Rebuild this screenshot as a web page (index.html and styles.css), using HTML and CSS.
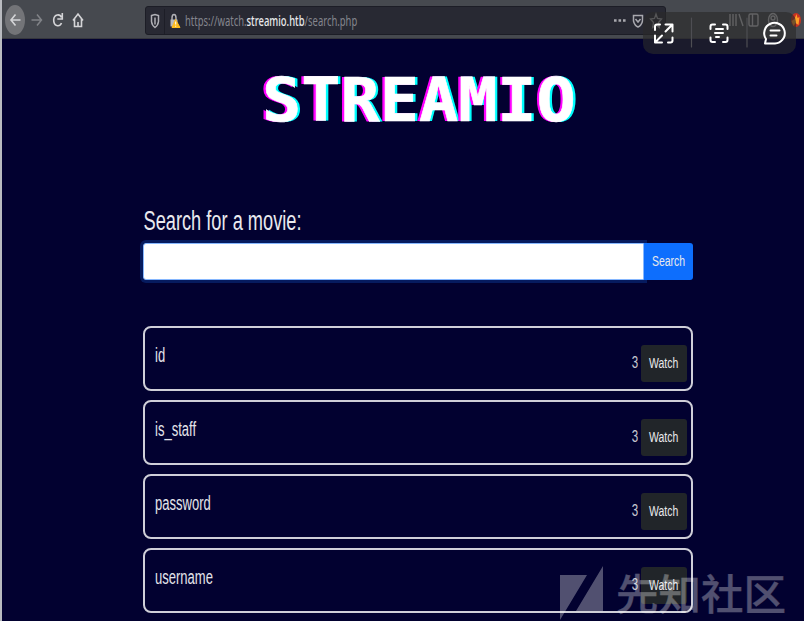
FILE: index.html
```html
<!DOCTYPE html>
<html lang="en">
<head>
<meta charset="utf-8">
<title>Streamio</title>
<link rel="stylesheet" href="styles.css">
</head>
<body>
<div class="window">
  <header class="toolbar">
    <svg class="nav" width="90" height="39" viewBox="0 0 90 39" fill="none" stroke="#d4d4d7" stroke-width="1.600">
      <ellipse cx="13" cy="20" rx="10" ry="15" fill="#737478" stroke="none"/>
      <path d="M18.500 20H9M13.500 14.500L9 20l4.500 5.500"/>
      <path d="M29.500 20h10M35 14.500l4.500 5.500-4.500 5.500" stroke="#818388" stroke-width="1.500"/>
      <path d="M59.500 17.500C58 13.500 52.200 14 51.700 19.500C51.500 26.500 57.500 27.500 59.500 23M60.300 13v6h-5"/>
      <path d="M71 20.500l5-6.500 5 6.500M72.500 19v7.500h7V19M76 26v-4"/>
    </svg>
    <div class="address">
      <svg class="lock" width="38" height="32" viewBox="0 0 38 32" fill="none" stroke="#b0b0b6" stroke-width="1.500">
        <path d="M5.500 8.500q3.500-1 3.500-1q3.500 1 3.500 1v6q-.5 4-3.500 6q-3-2-3.500-6zM9 10.500v7"/>
        <path d="M18.500 2v28" stroke="#1d1e27" stroke-width="1"/>
        <path d="M26 13v-2q0-3.500 2-3.500t2 3.500v2"/>
        <path d="M24.500 12.500h7v7h-7z" fill="#b8b8bd" stroke="none"/>
        <path d="M29.500 12.500l4.500 8h-8z" fill="#ffbd20" stroke="#ffbd20" stroke-width="1"/>
        <path d="M29.700 14.500v3M29.700 18.700v1" stroke="#fff" stroke-width="1"/>
      </svg>
      <span class="url">https://watch.<b>streamio.htb</b>/search.php</span>
      <svg class="actions" width="54" height="32" viewBox="0 0 54 32" fill="none" stroke="#a8a8ae" stroke-width="1.500">
        <path d="M4 13.500h12" stroke-width="2.500" stroke-dasharray="2.600 1.900"/>
        <path d="M23.500 8.500h9v5.500q-1 4.500-4.500 6q-3.500-1.500-4.500-6zM25.500 12l2.500 3 2.500-3"/>
        <path d="M46 7l1.500 4.500 4 .5-3 3.500.8 5-3.300-2.500-3.300 2.500.8-5-3-3.500 4-.5z" stroke="#a0a1a7" stroke-width="1.300"/>
      </svg>
    </div>
    <svg class="extras" width="78" height="39" viewBox="0 0 78 39" fill="none" stroke="#c2c3c7" stroke-width="1.400">
      <path d="M4 14v12M7 14v12M10 14v12M13 14l4 12"/>
      <rect x="23" y="14" width="9" height="12" rx="1.500"/><path d="M26.500 14v12"/>
      <ellipse cx="47" cy="20" rx="4.500" ry="6.500"/><circle cx="47" cy="18" r="2"/><path d="M44 25q3-5 6 0"/>
      <ellipse cx="70" cy="20" rx="5" ry="7" fill="#c83222" stroke="none"/>
      <path d="M65.500 21l3-2 2-5 1 4 2-1-1 8-3-2-2 3z" fill="#ff9e27" stroke="none"/>
    </svg>
  </header>
  <main class="page">
    <h1 class="brand"><span>STREAMIO</span></h1>
    <h2 class="label"><span>Search for a movie:</span></h2>
    <form class="search">
      <input class="field" type="text" aria-label="Movie">
      <button class="submit" type="button"><span class="narrow">Search</span></button>
    </form>
    <ul class="results">
      <li class="movie"><span class="name">id</span><span class="count">3</span><button class="watch"><span class="narrow">Watch</span></button></li>
      <li class="movie"><span class="name">is_staff</span><span class="count">3</span><button class="watch"><span class="narrow">Watch</span></button></li>
      <li class="movie"><span class="name">password</span><span class="count">3</span><button class="watch"><span class="narrow">Watch</span></button></li>
      <li class="movie"><span class="name">username</span><span class="count">3</span><button class="watch"><span class="narrow">Watch</span></button></li>
    </ul>
  </main>
</div>
<div class="viewer">
  <svg width="153" height="42" viewBox="0 0 153 42" fill="none" stroke="#fff" stroke-width="2" stroke-linecap="round" stroke-linejoin="round">
    <path d="M48.500 6v29M104 6v29" stroke="#4e4e53" stroke-width="1.200"/>
    <path d="M12 18v-3.500q0-2 2-2h3M22.500 12.500H29.500v7M29.500 12.500l-7 7M12 23.500v7H19M12 30.500l7-7M29.500 25.500v3q0 2-2 2H25"/>
    <path d="M67.500 17v-2.500q0-2 2-2H72M80 12.500h2.500q2 0 2 2V17M84.500 25.500v2.500q0 2-2 2H80M72 30h-2.500q-2 0-2-2V25.500M73 17h7M72 21h8M73 25h3"/>
    <path d="M122 31.500l1-4.500a10.300 10.300 0 1 1 9 4.500zM127.500 18.500h9M127.500 23.500h6"/>
  </svg>
</div>
<div class="watermark">
  <svg width="44" height="54" viewBox="0 0 44 54"><path d="M0 9h27L0 54zM43 0v45H16z" fill="currentColor"/></svg>
  <span lang="zh">先知社区</span>
</div>
</body>
</html>
```
FILE: styles.css
```css
* { box-sizing: border-box; }
body {
  margin: 0;
  height: 624px;
  overflow: hidden;
  background: #fff;
  font-family: "Liberation Sans", sans-serif;
  position: relative;
}
.window {
  height: 621px;
  border-left: 2px solid #b9bbc0;
  background: #020130;
  overflow: hidden;
}
.toolbar {
  height: 39px;
  background: #46494f;
  border-bottom: 1px solid #35363d;
  display: flex;
}
.nav { flex: none; }
.address {
  flex: none;
  display: flex;
  width: 521px;
  height: 29px;
  margin: 6px 0 0 53px;
  border: 1px solid #1c1d26;
  border-radius: 3px;
  background: #282933;
  overflow: hidden;
}
.lock { flex: none; }
.url {
  flex: 1;
  font: 15px/27px "Noto Sans", sans-serif;
  color: #85868e;
  white-space: nowrap;
  transform: translateX(1px) scaleX(.629);
  transform-origin: left;
}
.url b { color: #e9e9ec; font-weight: 500; }
.actions { flex: none; margin-right: 1px; }
.extras { flex: none; margin-left: 60px; }
.page { padding: 0 111px 0 141px; }
.brand {
  margin: 23px 0 0 119px;
  height: 77px;
  font: bold 60.500px/77px "DejaVu Sans Mono", monospace;
  color: #fff;
}
.brand span {
  display: inline-block;
  transform: scaleX(1.077);
  transform-origin: left;
  -webkit-text-stroke: .6px #fff;
  text-shadow: -2.500px 0 #f0f, 2.500px 0 #0ff;
}
.label {
  margin: 64px 0 0;
  height: 36px;
  font-size: 27px;
  line-height: 36px;
  font-weight: 400;
  color: #e9e9ee;
}
.label span, .narrow, .name, .count {
  display: inline-block;
  white-space: nowrap;
}
.label span { transform: translateX(.5px) scaleX(.675); transform-origin: left; }
.search { display: flex; height: 37px; margin: 4px 0 0; }
.field {
  width: 501px;
  border: 1px solid #86b7fe;
  border-radius: 3px 0 0 3px;
  background: #fff;
  box-shadow: 0 0 0 3px #061b5f;
  padding: 0 8px;
}
button {
  border: 0;
  padding: 0;
  font: 15.500px "Liberation Sans", sans-serif;
  color: #e9e9ec;
  display: flex;
  align-items: center;
  justify-content: center;
}
.submit {
  width: 49px;
  background: #0d6efd;
  border-radius: 0 3px 3px 0;
  position: relative;
}
.narrow { transform: translateY(-1px) scaleX(.675); }
.results { list-style: none; margin: 46px 0 0; padding: 0; display: grid; gap: 9px; }
.movie {
  display: flex;
  height: 65px;
  border: 2px solid #cfcfd8;
  border-radius: 8px;
  padding: 17px 4px 0 10px;
  color: #e4e4ea;
}
.name {
  flex: 1;
  font-size: 19.500px;
  line-height: 21px;
  transform: scaleX(.668);
  transform-origin: left;
}
.count {
  font-size: 16px;
  line-height: 35px;
  transform: translateX(.5px) scaleX(.72);
  color: #c9c9d2;
  margin-right: 2px;
}
.watch {
  width: 46px;
  height: 37px;
  background: #212529;
  border-radius: 3px;
}
.viewer {
  position: absolute;
  left: 643px;
  top: 12px;
  width: 153px;
  height: 42px;
  border-radius: 10px;
  background: rgba(42, 42, 42, .64);
}
.watermark {
  position: absolute;
  left: 560px;
  top: 566px;
  display: flex;
  gap: 12px;
  color: #fff;
  opacity: .31;
}
.watermark span {
  font: 500 42.500px/52px "Noto Sans CJK SC", sans-serif;
  -webkit-text-stroke: .3px #fff;
  white-space: nowrap;
}
```
